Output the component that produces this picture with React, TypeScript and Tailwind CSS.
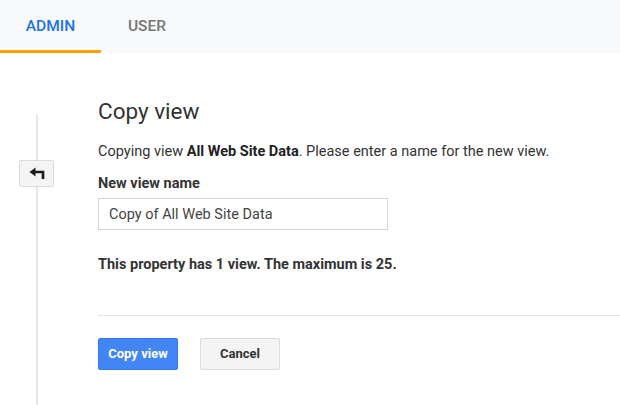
export default function App() {
  return (
    <div className="w-[620px] h-[405px] bg-white overflow-hidden font-['Roboto',sans-serif] text-[#333]">
      <div className="h-[53px] bg-[#f8f9fa] flex">
        <div className="w-[101px] border-b-[3px] border-[#ffa000] flex items-center justify-center pt-[3px] text-[15.5px] font-medium text-[#1a73e8]">
          ADMIN
        </div>
        <div className="w-[92px] flex items-center justify-center text-[15.5px] font-medium text-[#757575]">
          USER
        </div>
      </div>
      <div className="flex h-[352px]">
        <div className="ml-[19px] w-[35px] mt-[62px] flex flex-col items-center">
          <div className="w-[2px] h-[45px] bg-[#e6e6e6]" />
          <button className="w-[35px] h-[27px] bg-[#f4f4f4] border border-[#dcdcdc] rounded-[2px] flex items-center justify-center">
            <svg width="16" height="13" viewBox="0 0 16 13">
              <path d="M0.5 5 L6.5 0.5 L6.5 9.5 Z" fill="#1a1a1a" />
              <path d="M5 5 H14 V12" stroke="#1a1a1a" strokeWidth="2.6" fill="none" />
            </svg>
          </button>
          <div className="w-[2px] flex-1 bg-[#e6e6e6]" />
        </div>
        <div className="ml-[44px] flex-1 pt-[45px]">
          <h1 className="text-[22.5px] leading-[26px] text-[#333]">Copy view</h1>
          <p className="mt-[19px] text-[14.5px] leading-[18px] text-[#333]">
            Copying view <span className="font-bold text-[#222]">All Web Site Data</span>. Please enter a name for the new view.
          </p>
          <div className="mt-[14px] text-[14.5px] leading-[18px] font-bold text-[#333]">New view name</div>
          <input
            className="mt-[5px] w-[290px] h-[32px] border border-[#d6d6d6] px-[10px] text-[14.5px] text-[#444] outline-none"
            defaultValue="Copy of All Web Site Data"
          />
          <div className="mt-[26px] text-[14.5px] leading-[18px] font-bold text-[#333]">
            This property has 1 view. The maximum is 25.
          </div>
          <div className="mt-[41px] h-px bg-[#e4e4e4]" />
          <div className="mt-[22px] flex gap-[22px]">
            <button className="w-[80px] h-[32px] bg-[#4285f4] border border-[#3b78e7] rounded-[2px] text-white text-[13px] font-bold">
              Copy view
            </button>
            <button className="w-[80px] h-[32px] bg-[#f4f4f4] border border-[#dcdcdc] rounded-[2px] text-[#333] text-[13px] font-bold">
              Cancel
            </button>
          </div>
        </div>
      </div>
    </div>
  );
}
